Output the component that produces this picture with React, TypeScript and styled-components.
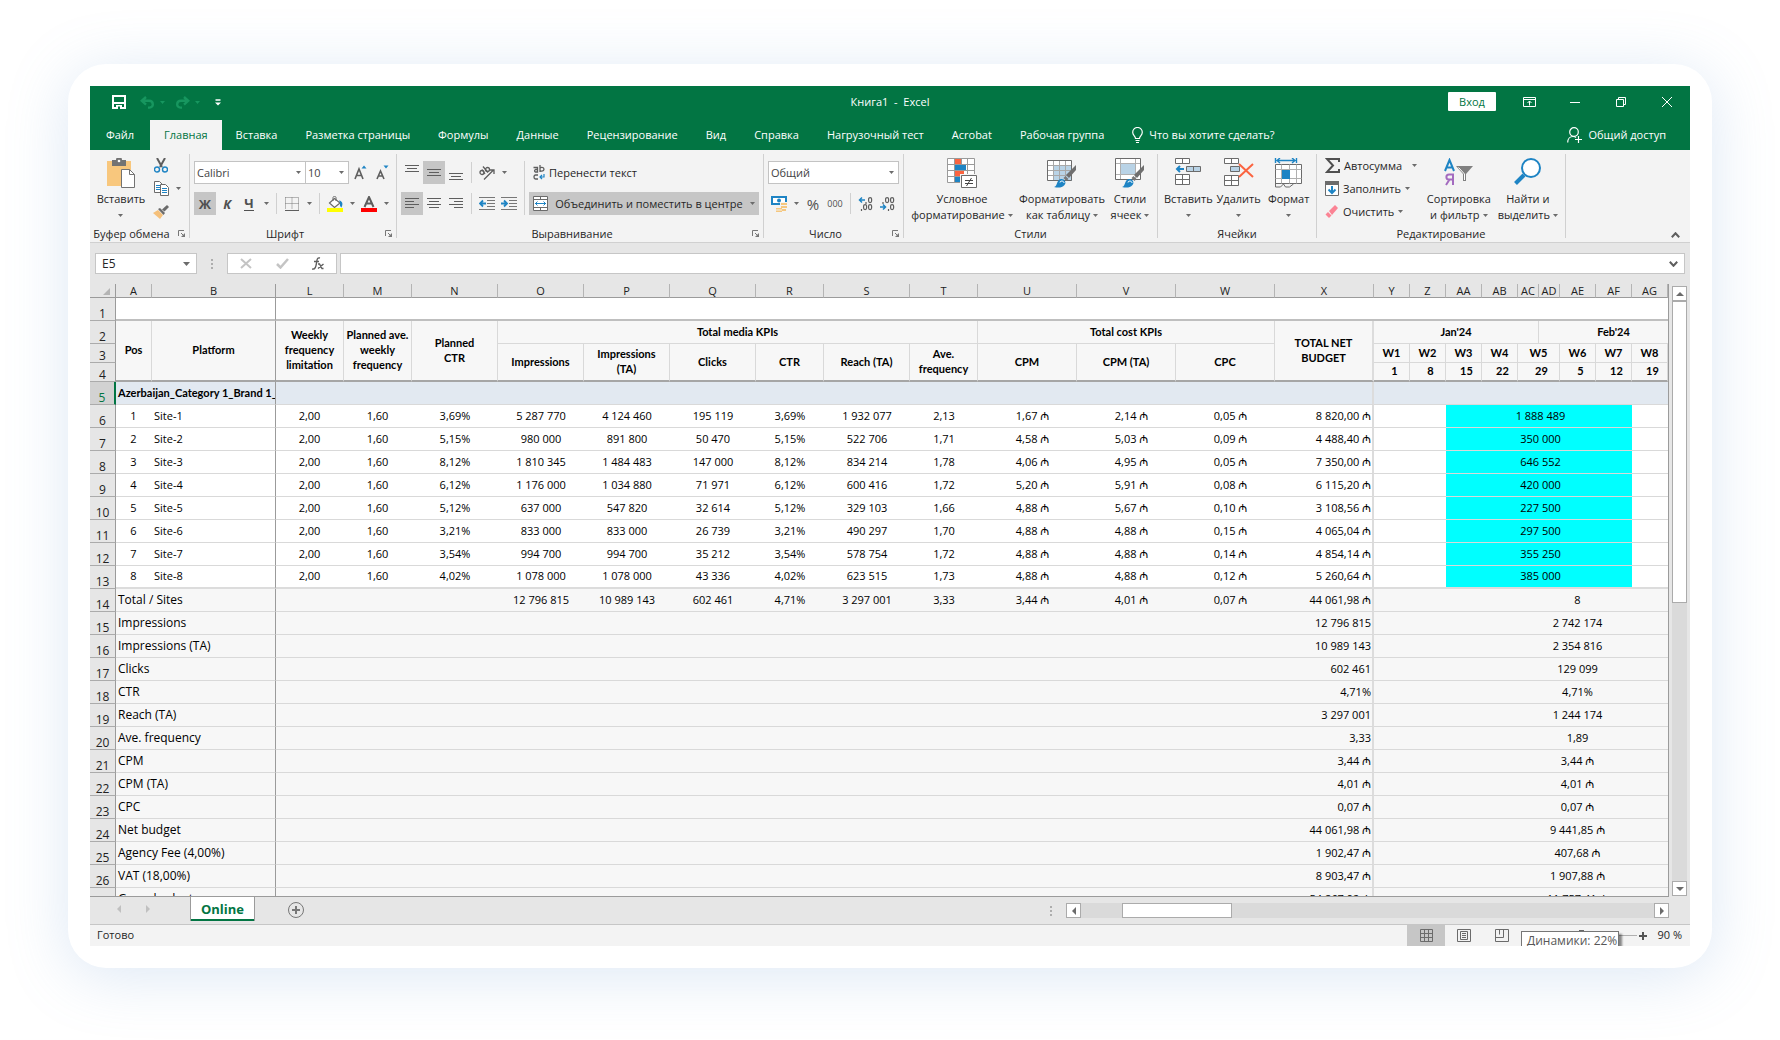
import React from "react";
import styled, { createGlobalStyle, css } from "styled-components";

const ui = `"Open Sans", "Noto Sans", sans-serif`;
const cell = `"Open Sans", "Noto Sans", sans-serif`;
const strong = `Lato, "Noto Sans", sans-serif`;
const green = "#027543";
const grey = "#6b6b6b";
const blue = "#1e84c4";
const line = "#d9d9d9";
const dark = "#9b9b9b";

const GlobalStyle = createGlobalStyle`
  *, *::before, *::after { box-sizing: border-box; }
  body { margin: 0; background: #fff; font-family: ${ui}; font-size: 11px; color: #262626; }
  button, input, select { font: inherit; color: inherit; margin: 0; }
  button { border: 0; background: none; padding: 0; cursor: pointer; }
  svg { display: block; flex: none; }
`;

const Page = styled.div`
  height: 100vh;
  min-height: 640px;
  padding: 64px 68px 72px;
  overflow: hidden;
`;
const Card = styled.div`
  height: 100%;
  padding: 22px;
  border-radius: 38px;
  background: #fff;
  box-shadow: 0 8px 60px rgba(120, 165, 215, 0.25);
`;
const Window = styled.main`
  height: 100%;
  display: flex;
  flex-direction: column;
  overflow: hidden;
  background: #e6e6e6;
`;

/* Title bar */
const TitleBar = styled.header`
  display: grid;
  grid-template-columns: 1fr auto 1fr;
  align-items: center;
  height: 34px;
  flex: none;
  background: ${green};
  color: #fff;
`;
const QuickAccess = styled.div`
  display: flex;
  align-items: center;
  gap: 9px;
  padding: 0 0 2px 17px;
`;
const QuickPair = styled.div`
  display: flex;
  gap: 3px;
`;
const QuickButton = styled.button<{ $w?: number }>`
  display: grid;
  place-items: center;
  width: ${(p) => p.$w ?? 15}px;
  height: 20px;
`;
const Title = styled.h1`
  margin: 0;
  font-size: 11px;
  font-weight: 400;
  white-space: pre;
  padding-bottom: 3px;
`;
const WindowButtons = styled.div`
  display: flex;
  justify-content: flex-end;
  align-items: center;
  padding-bottom: 3px;
`;
const SignIn = styled.button`
  width: 48px;
  height: 19px;
  margin-right: 10px;
  border-radius: 1px;
  background: #fff;
  color: ${green};
`;
const WindowButton = styled.button`
  display: grid;
  place-items: center;
  width: 46px;
  height: 30px;
`;

/* Ribbon tabs */
const TabBar = styled.nav`
  display: flex;
  align-items: stretch;
  height: 30px;
  flex: none;
  padding-right: 24px;
  background: ${green};
  color: #fff;
`;
const Tab = styled.button<{ $active?: boolean }>`
  display: flex;
  align-items: center;
  gap: 6px;
  padding: 0 14px 1px;
  white-space: nowrap;
  ${(p) => p.$active && css`background: #f3f3f3; color: ${green};`}
`;
const FileTab = styled(Tab)`
  width: 60px;
  justify-content: center;
`;
const Share = styled(Tab)`
  margin-left: auto;
  padding: 0 0 1px;
`;

/* Ribbon */
const Ribbon = styled.section`
  display: flex;
  height: 93px;
  flex: none;
  padding: 4px 0;
  background: #f3f3f3;
  border-bottom: 1px solid #d0d0d0;
`;
const Group = styled.section<{ $w: number }>`
  display: flex;
  flex-direction: column;
  justify-content: space-between;
  flex: 0 0 ${(p) => p.$w}px;
  min-width: 0;
  border-right: 1px solid #d0d0d0;
`;
const GroupBody = styled.div<{ $gap?: number; $pad?: number }>`
  display: flex;
  gap: ${(p) => p.$gap ?? 0}px;
  padding-left: ${(p) => p.$pad ?? 4}px;
`;
const GroupFoot = styled.footer`
  display: flex;
  align-items: center;
  height: 16px;
  margin-bottom: -3px;
`;
const GroupName = styled.span`
  flex: 1;
  text-align: center;
  white-space: nowrap;
`;
const Launcher = styled.button`
  width: 16px;
  height: 14px;
  display: grid;
  place-items: center;
`;
const Rows = styled.div`
  display: flex;
  flex-direction: column;
  gap: 8px;
  padding-top: 7px;
`;
const Stack = styled.div`
  display: flex;
  flex-direction: column;
`;
const Row = styled.div`
  display: flex;
  align-items: center;
  height: 23px;
`;
const Tool = styled.button<{ $on?: boolean; $wide?: boolean }>`
  display: flex;
  align-items: center;
  justify-content: ${(p) => (p.$wide ? "flex-start" : "center")};
  gap: 4px;
  min-width: 22px;
  height: 23px;
  padding: 0 ${(p) => (p.$wide ? 4 : 0)}px;
  background: ${(p) => (p.$on ? "#c6c6c6" : "transparent")};
  white-space: nowrap;
`;
const MergeTool = styled(Tool)`
  width: 230px;
  justify-content: space-between;
`;
const ArrowButton = styled.button`
  display: grid;
  place-items: center;
  width: 12px;
  height: 23px;
`;
const Sep = styled.i<{ $h?: number }>`
  width: 1px;
  height: ${(p) => p.$h ?? 21}px;
  margin: 0 4px;
  background: #d0d0d0;
`;
const Letter = styled.span<{ $italic?: boolean; $under?: boolean }>`
  font-weight: 700;
  font-size: 13px;
  line-height: 14px;
  color: #505050;
  font-style: ${(p) => (p.$italic ? "italic" : "normal")};
  border-bottom: ${(p) => (p.$under ? "1px solid #505050" : "0")};
`;
const Glyph = styled.span<{ $size: number }>`
  font-size: ${(p) => p.$size}px;
  color: #505050;
`;
const Big = styled.button<{ $w?: number }>`
  display: flex;
  flex-direction: column;
  align-items: center;
  flex: none;
  gap: 3px;
  padding-top: 4px;
  min-width: ${(p) => p.$w ?? 0}px;
  line-height: 16px;
  white-space: nowrap;
`;
const BigLine = styled.span`
  display: flex;
  align-items: center;
  justify-content: center;
  gap: 3px;
  min-height: 16px;
`;
const Picker = styled.label<{ $w: number }>`
  display: flex;
  align-items: center;
  width: ${(p) => p.$w}px;
  height: 23px;
  padding-right: 4px;
  border: 1px solid #c3c3c3;
  background: #fff;
  & + & { margin-left: -1px; }
`;
const Select = styled.select`
  flex: 1;
  min-width: 0;
  height: 21px;
  padding: 0 0 0 2px;
  border: 0;
  background: none;
  appearance: none;
  outline: none;
  color: #444;
`;
const Collapse = styled.button`
  align-self: flex-end;
  margin: 0 10px 0 auto;
`;

/* Formula bar */
const FormulaBar = styled.section`
  display: flex;
  flex: none;
  padding: 10px 5px;
`;
const Box = styled.div<{ $w?: number }>`
  display: flex;
  align-items: center;
  height: 21px;
  min-width: 0;
  flex: ${(p) => (p.$w ? `0 0 ${p.$w}px` : "1")};
  padding-right: 6px;
  border: 1px solid #c6c6c6;
  background: #fff;
`;
const FxBox = styled(Box)`
  justify-content: space-between;
  padding: 0 12px;
  margin-right: 3px;
`;
const TextBox = styled.input`
  flex: 1;
  min-width: 0;
  height: 19px;
  padding: 0 6px;
  border: 0;
  background: none;
  outline: none;
  font-size: 12px;
`;
const Dots = styled.div`
  display: flex;
  flex-direction: column;
  justify-content: center;
  align-items: center;
  gap: 2px;
  width: 30px;
  i { width: 2px; height: 2px; background: #adadad; }
`;

/* Sheet */
const SheetArea = styled.section`
  display: flex;
  flex: 1;
  min-height: 0;
`;
const Viewport = styled.div`
  flex: 1;
  min-width: 0;
  overflow: hidden;
  border-right: 1px solid ${dark};
  border-bottom: 1px solid ${dark};
`;
const Grid = styled.table`
  width: 100%;
  min-width: 1578px;
  table-layout: fixed;
  border-collapse: separate;
  border-spacing: 0;
  font-family: ${cell};
  font-size: 11px;
  line-height: 15px;
  color: #000;
`;
const Tr = styled.tr<{ $h?: number }>`
  height: ${(p) => p.$h ?? 23}px;
`;
const ColHead = styled.th<{ $freeze?: boolean }>`
  height: 14px;
  padding: 1px 0 0;
  font-weight: 400;
  font-size: 11px;
  line-height: 12px;
  color: #222;
  background: #e6e6e6;
  border-bottom: 1px solid ${dark};
  border-right: 1px solid ${(p) => (p.$freeze ? dark : "#b4b4b4")};
`;
const RowHead = styled.th<{ $on?: boolean }>`
  padding: 0;
  font-weight: 400;
  font-size: 12px;
  line-height: 13px;
  vertical-align: bottom;
  color: ${(p) => (p.$on ? green : "#222")};
  background: ${(p) => (p.$on ? "#d2d2d2" : "#e6e6e6")};
  border-bottom: 1px solid #ababab;
  border-right: ${(p) => (p.$on ? `2px solid ${green}` : `1px solid ${dark}`)};
`;
const Td = styled.td<{
  $bg?: string;
  $right?: string;
  $bottom?: string;
  $align?: string;
  $shift?: number;
  $bold?: boolean;
  $name?: boolean;
}>`
  padding: 0 1px 2px ${(p) => p.$shift ?? 0}px;
  text-align: ${(p) => p.$align ?? "center"};
  vertical-align: middle;
  white-space: nowrap;
  overflow: hidden;
  font-size: ${(p) => (p.$name ? 12 : 11)}px;
  background: ${(p) => p.$bg ?? "#fff"};
  border-right: ${(p) => p.$right ?? "0"};
  border-bottom: ${(p) => p.$bottom ?? `1px solid ${line}`};
  ${(p) => p.$bold && css`font-family: ${strong}; font-weight: 700;`}
`;
const Th = styled.th<{ $right?: string; $bottom?: string; $shift?: number }>`
  padding: 0 0 2px ${(p) => p.$shift ?? 0}px;
  font-family: ${strong};
  font-size: 11px;
  font-weight: 700;
  white-space: pre;
  background: #f7f7f7;
  border-right: ${(p) => p.$right ?? `1px solid ${line}`};
  border-bottom: ${(p) => p.$bottom ?? `1px solid ${line}`};
`;

/* Scroll bars */
const VScroll = styled.div`
  display: flex;
  flex-direction: column;
  width: 21px;
  padding: 2px 3px 1px;
`;
const ScrollButton = styled.button`
  display: grid;
  place-items: center;
  flex: none;
  width: 15px;
  height: 15px;
  border: 1px solid #ababab;
  background: #fff;
`;
const VTrack = styled.div`
  flex: 1;
  background: #dadada;
`;
const VThumb = styled.div`
  height: 52%;
  border: 1px solid #ababab;
  background: #fff;
`;
const HTrack = styled.div`
  flex: 0 0 573px;
  height: 15px;
  padding-left: 41px;
  background: #dadada;
`;
const HThumb = styled.div`
  width: 110px;
  height: 15px;
  border: 1px solid #ababab;
  background: #fff;
`;

/* Sheet tabs */
const SheetBar = styled.nav`
  display: flex;
  flex: none;
  height: 28px;
  padding-right: 21px;
  border-bottom: 1px solid #c6c6c6;
`;
const SheetArrows = styled.div`
  display: flex;
  align-items: center;
  gap: 14px;
  width: 100px;
  padding: 0 0 4px 21px;
`;
const SheetArrow = styled.button`
  display: grid;
  place-items: center;
  width: 15px;
  height: 15px;
`;
const SheetTab = styled.button`
  width: 65px;
  height: 24px;
  border: solid ${dark};
  border-width: 0 1px;
  background: #fff;
  box-shadow: inset 0 -2px ${green};
  color: ${green};
  font-size: 13px;
  font-weight: 700;
`;
const AddSheet = styled.button`
  align-self: flex-start;
  margin: 5px 0 0 33px;
`;
const HScroll = styled.div`
  display: flex;
  align-items: flex-start;
  padding-top: 6px;
  margin-left: auto;
`;
const HDots = styled(Dots)`
  height: 15px;
`;

/* Status bar */
const StatusBar = styled.footer`
  display: flex;
  align-items: center;
  flex: none;
  height: 21px;
  padding: 0 8px 0 7px;
  background: #f3f3f3;
`;
const StatusText = styled.span`
  margin-right: auto;
  padding-bottom: 2px;
`;
const ViewButton = styled.button<{ $on?: boolean }>`
  display: grid;
  place-items: center;
  width: 38px;
  height: 21px;
  background: ${(p) => (p.$on ? "#c6c6c6" : "transparent")};
`;
const Zoom = styled.div`
  position: relative;
  display: flex;
  align-items: center;
  height: 21px;
  margin-left: 26px;
`;
const Slider = styled.input`
  width: 90px;
  height: 15px;
  margin: 0 2px 0 0;
  appearance: none;
  background: linear-gradient(#b0b0b0, #b0b0b0) center / 100% 1px no-repeat;
  &::-webkit-slider-thumb {
    appearance: none;
    width: 5px;
    height: 12px;
    background: #666;
  }
`;
const ZoomValue = styled.span`
  width: 35px;
  padding-bottom: 2px;
  text-align: right;
  white-space: nowrap;
`;
const Tip = styled.div`
  position: absolute;
  left: -26px;
  top: 6px;
  width: 98px;
  height: 20px;
  padding-left: 5px;
  border: 1px solid #767676;
  background: #fff;
  box-shadow: 3px 3px 2px rgba(0, 0, 0, 0.45);
  color: #575757;
  font-size: 12px;
  line-height: 18px;
  white-space: nowrap;
`;

/* Icons */
const Svg = ({ w, h, children }: { w: number; h: number; children: React.ReactNode }) => (
  <svg width={w} height={h} viewBox={`0 0 ${w} ${h}`} fill="none" aria-hidden="true">{children}</svg>
);
const Caret = ({ c = "#6b6b6b", w = 5 }: { c?: string; w?: number }) => (
  <svg width={w} height={w === 5 ? 3 : 4} viewBox="0 0 6 3" preserveAspectRatio="none" aria-hidden="true"><path d="M0 0h6L3 3z" fill={c} /></svg>
);
const Tri = ({ d, c = "#6b6b6b" }: { d: "u" | "d" | "l" | "r"; c?: string }) => {
  const p = { u: "M0 6h8L4 2z", d: "M0 2h8L4 6z", l: "M6 0v8L2 4z", r: "M2 0v8l4-4z" }[d];
  return <Svg w={8} h={8}><path d={p} fill={c} /></Svg>;
};
const Save = () => (
  <Svg w={14} h={14}><path d="M1 1h12v12H1z" stroke="#fff" strokeWidth="2" /><path d="M1 7h12v2H1z" fill="#fff" /><path d="M4 10h6v4H4z" fill="#fff" /><path d="M6 11.500h2V14H6z" fill={green} /></Svg>
);
const Undo = ({ flip }: { flip?: boolean }) => (
  <Svg w={15} h={13}><g transform={flip ? "translate(15 0) scale(-1 1)" : undefined} stroke="#17965f" strokeWidth="2.4"><path d="M6 1L1.8 4.8 6 8.6M2 4.8h7c5 0 5 6.8 .5 6.8H8" /></g></Svg>
);
const Paste = () => (
  <Svg w={28} h={30}>
    <path d="M0 3h24v25H0z" fill="#f8c77d" /><path d="M5 2h4a3 3 0 0 1 6 0h4v6H5z" fill="#737373" /><circle cx="12" cy="3" r="1.3" fill="#fff" />
    <path d="M14.5 11.5h8l5 5v13h-13z" fill="#fff" stroke="#737373" /><path d="M22.5 11.5v5h5" stroke="#737373" />
  </Svg>
);
const Cut = () => (
  <Svg w={14} h={15}><path d="M3 0l5 9M11 0L6 9" stroke="#5e5e5e" strokeWidth="2" /><circle cx="3" cy="11.5" r="2.5" stroke={blue} strokeWidth="1.4" /><circle cx="11" cy="11.5" r="2.5" stroke={blue} strokeWidth="1.4" /></Svg>
);
const Copy = () => (
  <Svg w={15} h={15}>
    <path d="M.5.5h5l3 3v8h-8z" fill="#fff" stroke={grey} /><path d="M2 4.500h4M2 6.500h4M2 8.500h4" stroke={blue} />
    <path d="M6.500 3.500h5l3 3v8h-8z" fill="#fff" stroke={grey} /><path d="M8 7.500h5M8 9.500h5M8 11.500h5" stroke={blue} />
  </Svg>
);
const Brush = () => (
  <Svg w={16} h={14}><path d="M0 8l5-3 5 5-3 4z" fill="#f5c07a" /><path d="M5 4l2-1 5 5-1.500 2z" fill="#6b6b6b" /><path d="M9 4.500L14 0l2 2-4.500 4.500z" fill="#6b6b6b" /></Svg>
);
const Launch = () => <Svg w={7} h={7}><path d="M.5 6V.5H6M3 3l3 3" stroke="#777" /><path d="M7 3v4H3z" fill="#777" /></Svg>;
const FontSize = ({ up }: { up?: boolean }) => (
  <Svg w={13} h={15}><path d={up ? "M1 14L5 4l4 10M2.500 10.500h5" : "M1 14l3.500-8L8 14M2.200 11h4.500"} stroke="#5e5e5e" strokeWidth="1.6" /><path d={up ? "M7.500 3.500h5L10 .5z" : "M7.500.5h5L10 3.500z"} fill={blue} /></Svg>
);
const Lines = ({ k }: { k: string }) => {
  const rows: Record<string, [number, number, number][]> = {
    top: [[0, 0, 14], [2, 3, 10], [0, 6, 14]],
    mid: [[0, 4, 14], [2, 7, 10], [0, 10, 14]],
    bot: [[0, 8, 14], [2, 11, 10], [0, 14, 14]],
    left: [[0, 2, 14], [0, 5, 9], [0, 8, 14], [0, 11, 9]],
    center: [[0, 2, 14], [2, 5, 10], [0, 8, 14], [2, 11, 10]],
    right: [[0, 2, 14], [5, 5, 9], [0, 8, 14], [5, 11, 9]],
  };
  return <Svg w={14} h={15}>{rows[k].map(([x, y, w]) => <rect key={y} x={x} y={y} width={w} height="1" fill="#5e5e5e" />)}</Svg>;
};
const Indent = ({ out }: { out?: boolean }) => (
  <Svg w={16} h={13}>
    <path d="M0 .5h16M8 3.500h8M8 6.500h8M8 9.500h8M0 12.500h16" stroke="#777" />
    <path d={out ? "M7 6.500H2M4 3.500l-3 3 3 3" : "M0 6.500h5M3 3.500l3 3-3 3"} stroke={blue} strokeWidth="1.8" />
  </Svg>
);
const Orient = () => (
  <Svg w={16} h={14}><g stroke="#5e5e5e" strokeWidth="1.3"><circle cx="3" cy="6.500" r="2" /><path d="M3 3.500l3 4.500M4 .5l5 6" /><circle cx="8.500" cy="3.500" r="2" /><path d="M5 13.500L14.500 4M11 4h4v4" /></g></Svg>
);
const Wrap = () => (
  <Svg w={12} h={15}><g stroke="#5e5e5e" strokeWidth="1.3"><path d="M.5 2.500h4V7H2.500a1.3 1.3 0 0 1 0-2.500h2M7 0v7M7 3.500c0-1.500 4-1.500 4 .8S7 6.500 7 5M5 10H2.500C.5 10 .5 14 2.500 14H5" /></g><path d="M11 9v3H7.500M9 10l-2 2 2 2" stroke={blue} strokeWidth="1.2" /></Svg>
);
const Merge = () => (
  <Svg w={15} h={15}><path d="M.5.5h14v14H.5zM.5 3.500h14M.5 11.500h14M7.500.5v3M7.500 11.500v3" fill="#fff" stroke={grey} /><path d="M2 7.500h11M4.500 5.500l-2 2 2 2M10.500 5.500l2 2-2 2" stroke={blue} /></Svg>
);
const Borders = () => (
  <Svg w={14} h={14}><path d="M.5.5h13v12M.5.5v12M7 .5v12M.5 6.500h13" stroke="#777" strokeDasharray="1 1" /><path d="M0 13.500h14" stroke="#5e5e5e" /></Svg>
);
const Fill = () => (
  <Svg w={16} h={16}><path d="M2.500 7l5-4.500L13 7l-5.500 4.500z" fill="#fff" stroke={grey} strokeWidth="1.2" /><path d="M6 5V1.500c0-1.500 3-1.500 3 0V5" stroke={grey} /><path d="M12 4.500c4 .5 4 4 2.500 7-2-1-1.500-3-1.500-4.500z" fill={blue} /><path d="M0 12h16v4H0z" fill="#ff0" /></Svg>
);
const FontColor = () => (
  <Svg w={16} h={16}><path d="M3.500 11L8 1l4.500 10M5 7.500h6" stroke="#5e5e5e" strokeWidth="2" /><path d="M0 12h16v4H0z" fill="#f00" /></Svg>
);
const Money = () => (
  <Svg w={16} h={16}><path d="M0 0h16v9H0z" fill={blue} /><path d="M2 2h12v5H2z" fill="#fff" /><circle cx="8" cy="4.500" r="2" fill={blue} /><path d="M9 6h7v10H4v-4h5z" fill="#f3f3f3" /><path d="M10 7h6v2h-6zM10 10h6v2h-6zM5 12h6v1.500H5zM5 14.500h6V16H5zM11 13h4v2h-4z" fill="#f5c77f" /></Svg>
);
const Decimal = ({ less }: { less?: boolean }) => (
  <Svg w={16} h={16}>
    <g stroke="#5e5e5e" strokeWidth="1.2">
      {less ? <><rect x="5.600" y="1.600" width="3" height="5" rx="1.500" /><rect x="10.600" y="1.600" width="3" height="5" rx="1.500" /><rect x="10.600" y="8.600" width="3" height="5" rx="1.500" /><path d="M3 6v2M8.500 13v2" /></>
        : <><rect x="10.600" y="1.600" width="3" height="5" rx="1.500" /><rect x="5.600" y="8.600" width="3" height="5" rx="1.500" /><rect x="10.600" y="8.600" width="3" height="5" rx="1.500" /><path d="M8 6v2M3.500 13v2" /></>}
    </g>
    <path d={less ? "M0 11h5M3 8.500L5.500 11 3 13.500" : "M7 4H1.500M4 1.500L1.500 4 4 6.500"} stroke={blue} strokeWidth="1.5" />
  </Svg>
);
const CondFormat = () => (
  <Svg w={30} h={30}>
    <path d="M.5.5h27v24H.5z" fill="#fff" /><path d="M8 1h6v6H8z" fill="#fb6440" /><path d="M8 7h11v6H8z" fill={blue} /><path d="M8 13h9v6H8z" fill="#fb6440" /><path d="M8 19h5v6H8z" fill={blue} />
    <path d="M.5.5h27v24H.5zM.5 6.500h27M.5 12.500h27M.5 18.500h27M7.500.5v24M14.500.5v6M20.500.5v24" stroke="#9a9a9a" />
    <path d="M13 16h17v14H13z" fill="#f3f3f3" /><path d="M14.500 17.500h15v12h-15z" fill="#fff" stroke={grey} /><path d="M18 22.500h8M18 25.500h8M24.500 20l-5 8" stroke="#444" />
  </Svg>
);
const PaintBrush = () => (
  <><path d="M29 7v5l-7 8-3-3z" fill="#6f6f6f" /><path d="M18.500 18l3 3-2 2-3-3z" fill="#777" /><path d="M7 29c4-1 2-7 7-8 3-.5 6 3 3.500 6S11 30 7 29z" fill={blue} /><path d="M13 24.500c0-2 4-2 4 .5" stroke="#fff" /></>
);
const TableFormat = () => (
  <Svg w={30} h={30}><path d="M.5 2.500h24v20H.5z" fill="#fff" /><path d="M7 8h18v15H7z" fill="#b9d3e6" /><path d="M.5 2.500h24v20H.5z" stroke={grey} /><path d="M1 7.500h23M1 12.500h23M1 17.500h23M6.500 3v19M12.500 3v19M18.500 3v19" stroke="#a8a8a8" /><PaintBrush /></Svg>
);
const CellStyles = () => (
  <Svg w={30} h={30}><path d="M.5.5h25v21H.5z" fill="#fff" /><path d="M6 6h15v10H6z" fill="#b9d3e6" /><path d="M.5.5h25v21H.5z" stroke={grey} /><path d="M1 5.500h24M1 16.500h24M5.500 1v20M20.500 1v20" stroke="#b0b0b0" /><PaintBrush /></Svg>
);
const InsertCells = () => (
  <Svg w={27} h={30}><path d="M.5.5h14v5H.5zM7.500.5v5M.5 16.500h14v10H.5zM7.500 16.500v10M.5 21.500h14" fill="#fff" stroke={grey} /><path d="M11.500 8.500h14v5h-14zM18.500 8.500v5" fill="#b9d3e6" stroke={grey} /><path d="M9 11H2M5 8l-3 3 3 3" stroke={blue} strokeWidth="2" /></Svg>
);
const DeleteCells = () => (
  <Svg w={30} h={30}><path d="M.5.5h14v5H.5zM7.500.5v5M.5 17.500h14v10H.5zM7.500 17.500v10M.5 22.500h14" fill="#fff" stroke={grey} /><path d="M6.500 8.500h9v5h-9z" fill="#b9d3e6" stroke={grey} /><path d="M15 6l14 13M29 6L15 19" stroke="#fb6440" strokeWidth="2" /></Svg>
);
const FormatCells = () => (
  <Svg w={30} h={30}><path d="M1.500 0v5M22.500 0v5M3 2.500h18M6 0L3 2.500 6 5M18 0l3 2.500L18 5" stroke={blue} strokeWidth="1.4" /><path d="M1.500 6.500h26v19h-26z" fill="#fff" stroke={grey} /><path d="M1.500 11.500h26M1.500 20.500h26M7.500 6.500v19M15.500 6.500v19M22.500 6.500v19" stroke="#b0b0b0" /><path d="M8 12h8v9H8z" fill={blue} /><path d="M1.500 25v4h5l3-3 2 3h4l4-3" stroke={grey} /></Svg>
);
const Sigma = () => <Svg w={15} h={15}><path d="M14 4V1H2l6 6.500L2 14h12v-3" stroke="#505050" strokeWidth="2" /></Svg>;
const FillDown = () => <Svg w={14} h={15}><path d="M.5.5h13v14H.5z" fill="#fff" stroke={grey} /><path d="M0 0h14v4H0z" fill={grey} /><path d="M7 5v7M3.500 8.500L7 12l3.500-3.500" stroke={blue} strokeWidth="2" /></Svg>;
const Eraser = () => <Svg w={14} h={14}><path d="M4 6l6-6 3 3-6 7z" fill="#fb8394" /><path d="M3 7l3.500 3.500L4 13 .5 9.500z" fill="#fb8394" /></Svg>;
const SortFilter = () => (
  <Svg w={30} h={30}><path d="M1 13L5.500 2 10 13M2.500 9.500h6" stroke={blue} strokeWidth="2" /><path d="M9 27V16.500H5c-3.500 0-3.500 5 0 5h4M5.500 21.500L2 27" stroke="#a36bbf" strokeWidth="2" /><path d="M12 8h17l-7 8v7h-3v-7z" fill="#808080" /><path d="M14.500 9.500l6 6.500v6" stroke="#fff" /></Svg>
);
const Find = () => <Svg w={28} h={30}><circle cx="17" cy="10" r="9" fill="#fff" stroke={blue} strokeWidth="2" /><path d="M10 17l-8.500 8.500" stroke={blue} strokeWidth="4" /></Svg>;
const Bulb = () => <Svg w={11} h={16}><path d="M3.500 11.500C3.500 9 .7 8.500.7 5.300a4.800 4.800 0 0 1 9.600 0c0 3.200-2.800 3.700-2.800 6.200zM3.500 13.500h4M4 15.500h3" stroke="#fff" strokeWidth="1.2" /></Svg>;
const Person = () => <Svg w={15} h={16}><circle cx="7" cy="5" r="4.300" stroke="#fff" strokeWidth="1.2" /><path d="M.7 15.500C.7 12 3 9.500 6 9.500c1.500 0 2.500.5 3 1M8 12.500h7M11.500 9v7" stroke="#fff" strokeWidth="1.2" /></Svg>;
const Chevron = ({ up }: { up?: boolean }) => <Svg w={9} h={6}><path d={up ? "M.8 5.200l3.700-4 3.700 4" : "M.8.8l3.700 4 3.700-4"} stroke="#5e5e5e" strokeWidth="2" /></Svg>;

/* Data */
const colWidths = [26, 36, 124, 68, 68, 86, 86, 86, 86, 68, 86, 68, 99, 99, 99, 99, 36, 36, 36, 36, 21, 21, 36, 36, 36];
const colNames = "A B L M N O P Q R S T U V W X Y Z AA AB AC AD AE AF AG".split(" ");
const sites = [
  ["3,69%", "5 287 770", "4 124 460", "195 119", "3,69%", "1 932 077", "2,13", "1,67 ₼", "2,14 ₼", "0,05 ₼", "8 820,00 ₼", "1 888 489"],
  ["5,15%", "980 000", "891 800", "50 470", "5,15%", "522 706", "1,71", "4,58 ₼", "5,03 ₼", "0,09 ₼", "4 488,40 ₼", "350 000"],
  ["8,12%", "1 810 345", "1 484 483", "147 000", "8,12%", "834 214", "1,78", "4,06 ₼", "4,95 ₼", "0,05 ₼", "7 350,00 ₼", "646 552"],
  ["6,12%", "1 176 000", "1 034 880", "71 971", "6,12%", "600 416", "1,72", "5,20 ₼", "5,91 ₼", "0,08 ₼", "6 115,20 ₼", "420 000"],
  ["5,12%", "637 000", "547 820", "32 614", "5,12%", "329 103", "1,66", "4,88 ₼", "5,67 ₼", "0,10 ₼", "3 108,56 ₼", "227 500"],
  ["3,21%", "833 000", "833 000", "26 739", "3,21%", "490 297", "1,70", "4,88 ₼", "4,88 ₼", "0,15 ₼", "4 065,04 ₼", "297 500"],
  ["3,54%", "994 700", "994 700", "35 212", "3,54%", "578 754", "1,72", "4,88 ₼", "4,88 ₼", "0,14 ₼", "4 854,14 ₼", "355 250"],
  ["4,02%", "1 078 000", "1 078 000", "43 336", "4,02%", "623 515", "1,73", "4,88 ₼", "4,88 ₼", "0,12 ₼", "5 260,64 ₼", "385 000"],
];
const totalRow = ["", "12 796 815", "10 989 143", "602 461", "4,71%", "3 297 001", "3,33", "3,44 ₼", "4,01 ₼", "0,07 ₼", "44 061,98 ₼"];
const summary = [
  ["Impressions", "12 796 815", "2 742 174"],
  ["Impressions (TA)", "10 989 143", "2 354 816"],
  ["Clicks", "602 461", "129 099"],
  ["CTR", "4,71%", "4,71%"],
  ["Reach (TA)", "3 297 001", "1 244 174"],
  ["Ave. frequency", "3,33", "1,89"],
  ["CPM", "3,44 ₼", "3,44 ₼"],
  ["CPM (TA)", "4,01 ₼", "4,01 ₼"],
  ["CPC", "0,07 ₼", "0,07 ₼"],
  ["Net budget", "44 061,98 ₼", "9 441,85 ₼"],
  ["Agency Fee (4,00%)", "1 902,47 ₼", "407,68 ₼"],
  ["VAT (18,00%)", "8 903,47 ₼", "1 907,88 ₼"],
  ["Gross budget", "54 867,92 ₼", "11 757,41 ₼"],
];
const tabs = ["Главная", "Вставка", "Разметка страницы", "Формулы", "Данные", "Рецензирование", "Вид", "Справка", "Нагрузочный тест", "Acrobat", "Рабочая группа"];

const freeze = `1px solid ${dark}`;
const thick = "2px solid #dcdcdc";
const headEnd = "2px solid #a6a6a6";
const soft = "#f7f7f7";
const band = "#e2e9f1";

const Arrow = ({ label }: { label: string }) => <ArrowButton aria-label={label}><Caret /></ArrowButton>;
const Foot = ({ name, launch }: { name: string; launch?: boolean }) => (
  <GroupFoot><GroupName>{name}</GroupName>{launch && <Launcher aria-label={name}><Launch /></Launcher>}</GroupFoot>
);

const RibbonView = () => (
  <Ribbon>
    <Group $w={100}>
      <GroupBody $pad={2}>
        <Big $w={58}><Paste /><span><BigLine>Вставить</BigLine><BigLine><Caret /></BigLine></span></Big>
        <Stack>
          <Row><Tool aria-label="Вырезать"><Cut /></Tool></Row>
          <Row><Tool aria-label="Копировать"><Copy /></Tool><Arrow label="Копировать как" /></Row>
          <Row><Tool aria-label="Формат по образцу"><Brush /></Tool></Row>
        </Stack>
      </GroupBody>
      <Foot name="Буфер обмена" launch />
    </Group>

    <Group $w={207}>
      <GroupBody>
        <Rows>
          <Row>
            <Picker $w={112}><Select aria-label="Шрифт"><option>Calibri</option></Select><Caret /></Picker>
            <Picker $w={44}><Select aria-label="Размер шрифта"><option>10</option></Select><Caret /></Picker>
            <Tool aria-label="Увеличить размер шрифта"><FontSize up /></Tool>
            <Tool aria-label="Уменьшить размер шрифта"><FontSize /></Tool>
          </Row>
          <Row>
            <Tool $on><Letter>Ж</Letter></Tool>
            <Tool><Letter $italic>К</Letter></Tool>
            <Tool><Letter $under>Ч</Letter></Tool>
            <Arrow label="Подчеркивание" />
            <Sep />
            <Tool aria-label="Границы"><Borders /></Tool><Arrow label="Все границы" />
            <Sep />
            <Tool aria-label="Цвет заливки"><Fill /></Tool><Arrow label="Цвета заливки" />
            <Tool aria-label="Цвет шрифта"><FontColor /></Tool><Arrow label="Цвета шрифта" />
          </Row>
        </Rows>
      </GroupBody>
      <Foot name="Шрифт" launch />
    </Group>

    <Group $w={367}>
      <GroupBody>
        <Rows>
          <Row>
            <Tool aria-label="По верхнему краю"><Lines k="top" /></Tool>
            <Tool aria-label="По середине" $on><Lines k="mid" /></Tool>
            <Tool aria-label="По нижнему краю"><Lines k="bot" /></Tool>
            <Sep />
            <Tool aria-label="Ориентация"><Orient /></Tool><Arrow label="Ориентация текста" />
          </Row>
          <Row>
            <Tool aria-label="По левому краю" $on><Lines k="left" /></Tool>
            <Tool aria-label="По центру"><Lines k="center" /></Tool>
            <Tool aria-label="По правому краю"><Lines k="right" /></Tool>
            <Sep />
            <Tool aria-label="Уменьшить отступ"><Indent out /></Tool>
            <Tool aria-label="Увеличить отступ"><Indent /></Tool>
          </Row>
        </Rows>
        <Rows><Sep $h={54} /></Rows>
        <Rows>
          <Tool $wide><Wrap />Перенести текст</Tool>
          <MergeTool $wide $on><Merge />Объединить и поместить в центре<Caret /></MergeTool>
        </Rows>
      </GroupBody>
      <Foot name="Выравнивание" launch />
    </Group>

    <Group $w={140}>
      <GroupBody>
        <Rows>
          <Picker $w={131}><Select aria-label="Числовой формат"><option>Общий</option></Select><Caret /></Picker>
          <Row>
            <Tool aria-label="Финансовый формат"><Money /></Tool><Arrow label="Валюты" />
            <Tool><Glyph $size={15}>%</Glyph></Tool>
            <Tool><Glyph $size={9}>000</Glyph></Tool>
            <Sep />
            <Tool aria-label="Увеличить разрядность"><Decimal /></Tool>
            <Tool aria-label="Уменьшить разрядность"><Decimal less /></Tool>
          </Row>
        </Rows>
      </GroupBody>
      <Foot name="Число" launch />
    </Group>

    <Group $w={254}>
      <GroupBody $gap={4} $pad={6}>
        <Big $w={104}><CondFormat /><span><BigLine>Условное</BigLine><BigLine>форматирование<Caret /></BigLine></span></Big>
        <Big $w={88}><TableFormat /><span><BigLine>Форматировать</BigLine><BigLine>как таблицу<Caret /></BigLine></span></Big>
        <Big $w={40}><CellStyles /><span><BigLine>Стили</BigLine><BigLine>ячеек<Caret /></BigLine></span></Big>
      </GroupBody>
      <Foot name="Стили" />
    </Group>

    <Group $w={159}>
      <GroupBody $gap={2} $pad={6}>
        <Big $w={48}><InsertCells /><span><BigLine>Вставить</BigLine><BigLine><Caret /></BigLine></span></Big>
        <Big $w={48}><DeleteCells /><span><BigLine>Удалить</BigLine><BigLine><Caret /></BigLine></span></Big>
        <Big $w={48}><FormatCells /><span><BigLine>Формат</BigLine><BigLine><Caret /></BigLine></span></Big>
      </GroupBody>
      <Foot name="Ячейки" />
    </Group>

    <Group $w={249}>
      <GroupBody $gap={4}>
        <Stack>
          <Tool $wide><Sigma />Автосумма&nbsp;&nbsp;<Caret /></Tool>
          <Tool $wide><FillDown />Заполнить<Caret /></Tool>
          <Tool $wide><Eraser />Очистить<Caret /></Tool>
        </Stack>
        <Big $w={68}><SortFilter /><span><BigLine>Сортировка</BigLine><BigLine>и фильтр<Caret /></BigLine></span></Big>
        <Big $w={62}><Find /><span><BigLine>Найти и</BigLine><BigLine>выделить<Caret /></BigLine></span></Big>
      </GroupBody>
      <Foot name="Редактирование" />
    </Group>
    <Collapse aria-label="Свернуть ленту"><Chevron up /></Collapse>
  </Ribbon>
);

const weeks: [string, string, number][] = [["W1", "1", 1], ["W2", "8", 1], ["W3", "15", 1], ["W4", "22", 1], ["W5", "29", 2], ["W6", "5", 1], ["W7", "12", 1], ["W8", "19", 1]];

const GridView = () => (
  <Grid>
    <colgroup>{colWidths.map((w, i) => <col key={i} width={w} />)}</colgroup>
    <thead>
      <tr>
        <ColHead $freeze aria-label="Выделить все"><svg width="24" height="12" viewBox="0 0 24 12" aria-hidden="true"><path d="M20 3v7h-7z" fill="#b4b4b4" /></svg></ColHead>
        {colNames.map((c) => <ColHead key={c} scope="col" $freeze={c === "B"}>{c}</ColHead>)}
      </tr>
    </thead>
    <tbody>
      <Tr>
        <RowHead>1</RowHead>
        <Td colSpan={2} $right={freeze} $bottom="2px solid #bfbfbf" />
        <Td colSpan={22} $bottom="2px solid #bfbfbf" />
      </Tr>
      <Tr>
        <RowHead>2</RowHead>
        <Th rowSpan={3} $bottom={headEnd}>Pos</Th>
        <Th rowSpan={3} $right={freeze} $bottom={headEnd}>Platform</Th>
        <Th rowSpan={3} $bottom={headEnd}>{"Weekly\nfrequency\nlimitation"}</Th>
        <Th rowSpan={3} $bottom={headEnd}>{"Planned ave.\nweekly\nfrequency"}</Th>
        <Th rowSpan={3} $bottom={headEnd}>{"Planned\nCTR"}</Th>
        <Th colSpan={6}>Total media KPIs</Th>
        <Th colSpan={3}>Total cost KPIs</Th>
        <Th rowSpan={3} $right={thick} $bottom={headEnd}>{"TOTAL NET\nBUDGET"}</Th>
        <Th colSpan={5}>Jan'24</Th>
        <Th colSpan={4} $shift={20} $right="0">Feb'24</Th>
      </Tr>
      <Tr $h={19}>
        <RowHead>3</RowHead>
        {["Impressions", "Impressions\n(TA)", "Clicks", "CTR", "Reach (TA)", "Ave.\nfrequency", "CPM", "CPM (TA)", "CPC"].map((t) => (
          <Th key={t} rowSpan={2} $bottom={headEnd}>{t}</Th>
        ))}
        {weeks.map(([w, , s]) => <Th key={w} colSpan={s}>{w}</Th>)}
      </Tr>
      <Tr $h={19}>
        <RowHead>4</RowHead>
        {weeks.map(([w, d, s]) => <Th key={w} colSpan={s} $shift={6} $bottom={headEnd}>{d}</Th>)}
      </Tr>
      <Tr>
        <RowHead $on>5</RowHead>
        <Td colSpan={2} $bg={band} $right={freeze} $align="left" $shift={2} $bold>Azerbaijan_Category 1_Brand 1_</Td>
        <Td colSpan={13} $bg={band} $right={thick} />
        <Td colSpan={9} $bg={band} />
      </Tr>
      {sites.map((s, i) => {
        const end = i === sites.length - 1 ? thick : undefined;
        return (
          <Tr key={i}>
            <RowHead>{i + 6}</RowHead>
            <Td $bottom={end}>{i + 1}</Td>
            <Td $bottom={end} $right={freeze} $align="left" $shift={2}>Site-{i + 1}</Td>
            <Td $bottom={end}>2,00</Td>
            <Td $bottom={end}>1,60</Td>
            {s.slice(0, 10).map((v, k) => <Td key={k} $bottom={end} $shift={k > 6 ? 11 : 1}>{v}</Td>)}
            <Td $bottom={end} $right={thick} $align="right">{s[10]}</Td>
            <Td $bottom={end} colSpan={2} />
            <Td $bottom={end} colSpan={6} $bg="#0ff" $shift={4}>{s[11]}</Td>
            <Td $bottom={end} />
          </Tr>
        );
      })}
      <Tr>
        <RowHead>14</RowHead>
        <Td colSpan={2} $bg={soft} $right={freeze} $align="left" $shift={2} $name>Total / Sites</Td>
        <Td $bg={soft} colSpan={2} />
        {totalRow.slice(0, 10).map((v, k) => <Td key={k} $bg={soft} $shift={k > 6 ? 11 : 1}>{v}</Td>)}
        <Td $bg={soft} $right={thick} $align="right">{totalRow[10]}</Td>
        <Td $bg={soft} colSpan={9} $shift={114}>8</Td>
      </Tr>
      {summary.map(([name, total, period], i) => (
        <Tr key={name}>
          <RowHead>{i + 15}</RowHead>
          <Td colSpan={2} $bg={soft} $right={freeze} $align="left" $shift={2} $name>{name}</Td>
          <Td colSpan={13} $bg={soft} $right={thick} $align="right">{total}</Td>
          <Td colSpan={9} $bg={soft} $shift={114}>{period}</Td>
        </Tr>
      ))}
    </tbody>
  </Grid>
);

export default function App() {
  return (
    <Page>
      <GlobalStyle />
      <Card>
        <Window>
          <TitleBar>
            <QuickAccess>
              <QuickButton $w={24} aria-label="Сохранить"><Save /></QuickButton>
              <QuickPair>
                <QuickButton aria-label="Отменить"><Undo /></QuickButton>
                <QuickButton $w={8} aria-label="Список отмены"><Caret c="#17965f" /></QuickButton>
              </QuickPair>
              <QuickPair>
                <QuickButton aria-label="Повторить"><Undo flip /></QuickButton>
                <QuickButton $w={8} aria-label="Список повтора"><Caret c="#17965f" /></QuickButton>
              </QuickPair>
              <QuickButton aria-label="Настройка панели"><Svg w={6} h={7}><path d="M.5 1h5" stroke="#fff" strokeWidth="1.5" /><path d="M0 3.500h6l-3 3z" fill="#fff" /></Svg></QuickButton>
            </QuickAccess>
            <Title>{"Книга1  -  Excel"}</Title>
            <WindowButtons>
              <SignIn>Вход</SignIn>
              <WindowButton aria-label="Параметры отображения ленты"><Svg w={13} h={10}><path d="M.5.5h12v9H.5zM.5 2.500h12M6.500 8.500V4M4.500 6l2-2 2 2" stroke="#fff" /></Svg></WindowButton>
              <WindowButton aria-label="Свернуть"><Svg w={10} h={10}><path d="M0 5.500h10" stroke="#fff" /></Svg></WindowButton>
              <WindowButton aria-label="Восстановить"><Svg w={10} h={10}><path d="M.5 2.500h7v7h-7zM2.500 2.500v-2h7v7h-2" stroke="#fff" /></Svg></WindowButton>
              <WindowButton aria-label="Закрыть"><Svg w={10} h={10}><path d="M0 0l10 10M10 0L0 10" stroke="#fff" /></Svg></WindowButton>
            </WindowButtons>
          </TitleBar>
          <TabBar>
            <FileTab>Файл</FileTab>
            {tabs.map((t) => <Tab key={t} $active={t === "Главная"}>{t}</Tab>)}
            <Tab><Bulb />Что вы хотите сделать?</Tab>
            <Share><Person />Общий доступ</Share>
          </TabBar>
          <RibbonView />
          <FormulaBar>
            <Box $w={102}><TextBox aria-label="Имя" defaultValue="E5" /><Caret w={7} /></Box>
            <Dots><i /><i /><i /></Dots>
            <FxBox $w={110}>
              <button aria-label="Отмена"><Svg w={12} h={11}><path d="M1 1l10 9M11 1L1 10" stroke="#c4c4c4" strokeWidth="2" /></Svg></button>
              <button aria-label="Ввод"><Svg w={13} h={11}><path d="M1 6l3.500 3.500L12 1" stroke="#c4c4c4" strokeWidth="2.5" /></Svg></button>
              <button aria-label="Вставить функцию"><Svg w={12} h={13}><path d="M8 1C5 .2 5 3 4.500 6S3.500 13 0 12M2 4.500h5M6 7l1.500 0L10 11.500h1.500M11.500 7L6 11.500" stroke="#5e5e5e" strokeWidth="1.4" /></Svg></button>
            </FxBox>
            <Box><TextBox aria-label="Строка формул" /><Chevron /></Box>
          </FormulaBar>
          <SheetArea>
            <Viewport><GridView /></Viewport>
            <VScroll>
              <ScrollButton aria-label="Вверх"><Tri d="u" /></ScrollButton>
              <VTrack><VThumb /></VTrack>
              <ScrollButton aria-label="Вниз"><Tri d="d" /></ScrollButton>
            </VScroll>
          </SheetArea>
          <SheetBar>
            <SheetArrows>
              <SheetArrow aria-label="Предыдущий лист"><Tri d="l" c="#c0c0c0" /></SheetArrow>
              <SheetArrow aria-label="Следующий лист"><Tri d="r" c="#c0c0c0" /></SheetArrow>
            </SheetArrows>
            <SheetTab>Online</SheetTab>
            <AddSheet aria-label="Новый лист"><Svg w={16} h={16}><circle cx="8" cy="8" r="7.500" stroke="#777" /><path d="M8 4v8M4 8h8" stroke="#777" strokeWidth="2" /></Svg></AddSheet>
            <HScroll>
              <HDots><i /><i /><i /></HDots>
              <ScrollButton aria-label="Влево"><Tri d="l" /></ScrollButton>
              <HTrack><HThumb /></HTrack>
              <ScrollButton aria-label="Вправо"><Tri d="r" /></ScrollButton>
            </HScroll>
          </SheetBar>
          <StatusBar>
            <StatusText>Готово</StatusText>
            <ViewButton $on aria-label="Обычный"><Svg w={13} h={13}><path d="M.5.5h12v12H.5zM.5 4.500h12M.5 8.500h12M4.500.5v12M8.500.5v12" stroke={grey} /></Svg></ViewButton>
            <ViewButton aria-label="Разметка страницы"><Svg w={14} h={13}><path d="M.5.5h13v12H.5zM3.500 2.500h7v8h-7zM5 4.500h4M5 6.500h4M5 8.500h4" stroke={grey} /></Svg></ViewButton>
            <ViewButton aria-label="Страничный режим"><Svg w={14} h={13}><path d="M.5.5h13v12H.5zM.5 8.500h8v-8M4.500.5v5" stroke={grey} /></Svg></ViewButton>
            <Zoom>
              <Slider type="range" aria-label="Масштаб" min={10} max={170} defaultValue={70} />
              <Svg w={8} h={8}><path d="M4 0v8M0 4h8" stroke="#555" strokeWidth="2" /></Svg>
              <ZoomValue>90 %</ZoomValue>
              <Tip role="tooltip">Динамики: 22%</Tip>
            </Zoom>
          </StatusBar>
        </Window>
      </Card>
    </Page>
  );
}
